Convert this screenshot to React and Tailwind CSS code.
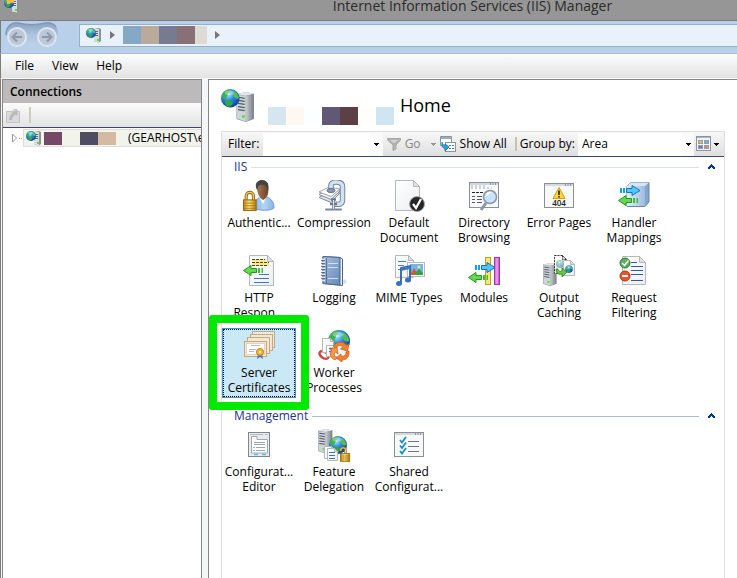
import React from "react";

const Defs = () => (
  <svg width="0" height="0" className="absolute" aria-hidden="true">
    <defs>
      <radialGradient id="sea" cx="40%" cy="30%" r="75%">
        <stop offset="0" stopColor="#a5e8ff" />
        <stop offset="0.4" stopColor="#2b8fe8" />
        <stop offset="1" stopColor="#0b2f9c" />
      </radialGradient>
      <linearGradient id="metal" x1="0" x2="1">
        <stop offset="0" stopColor="#c9ced2" />
        <stop offset="1" stopColor="#7a8187" />
      </linearGradient>
      <linearGradient id="gold" x1="0" x2="1">
        <stop offset="0" stopColor="#c08a1c" />
        <stop offset="0.45" stopColor="#ffe27a" />
        <stop offset="1" stopColor="#b27a10" />
      </linearGradient>
      <linearGradient id="steel" x1="0" x2="1">
        <stop offset="0" stopColor="#c9d8ea" />
        <stop offset="0.5" stopColor="#f2f6fb" />
        <stop offset="1" stopColor="#a9bcd4" />
      </linearGradient>
      <linearGradient id="book" x1="0" x2="1" y1="0" y2="1">
        <stop offset="0" stopColor="#a9c0e2" />
        <stop offset="1" stopColor="#6688b8" />
      </linearGradient>
      <linearGradient id="cube" x1="0" x2="1">
        <stop offset="0" stopColor="#e2eefb" />
        <stop offset="1" stopColor="#9dbbe0" />
      </linearGradient>
      <linearGradient id="pink" x1="0" x2="1">
        <stop offset="0" stopColor="#d455d4" />
        <stop offset="0.5" stopColor="#f0a5ee" />
        <stop offset="1" stopColor="#b63cba" />
      </linearGradient>
      <linearGradient id="shirt" x1="0" x2="1">
        <stop offset="0" stopColor="#7fb4e6" />
        <stop offset="0.5" stopColor="#b5d6f5" />
        <stop offset="1" stopColor="#86b5e4" />
      </linearGradient>
      <linearGradient id="skin" x1="0" x2="1">
        <stop offset="0" stopColor="#a87650" />
        <stop offset="1" stopColor="#6b4228" />
      </linearGradient>
      <linearGradient id="sheet" x1="0" x2="1" y1="0" y2="1">
        <stop offset="0" stopColor="#ffffff" />
        <stop offset="1" stopColor="#eceef0" />
      </linearGradient>
      <linearGradient id="pill" x1="0" x2="0" y1="0" y2="1">
        <stop offset="0" stopColor="#87a3c2" />
        <stop offset="0.5" stopColor="#adc4de" />
        <stop offset="1" stopColor="#bdd2ea" />
      </linearGradient>
    </defs>
  </svg>
);

const Globe = ({ cx, cy, r }) => (
  <g transform={`translate(${cx} ${cy}) scale(${r / 10})`}>
    <circle r="10" fill="url(#sea)" />
    <path d="M-9 -3 C-8 -7 -4 -9.500 -1 -9.500 C1 -8 -1 -6 -3 -5 C-2 -3 -5 -1 -6 1 C-8 0 -9 -1 -9 -3Z" fill="#3fb344" />
    <path d="M-5 2 C-2 1 2 3 3 5 C2 8 -1 9.500 -3 9 C-5 7 -7 5 -5 2Z" fill="#35a83a" />
    <path d="M4 -8 C7 -6 9 -3 9.500 0 C7 1 5 0 4 -2 C2 -3 2 -6 4 -8Z" fill="#55c04c" />
    <ellipse cx="-1" cy="-6" rx="5" ry="2.500" fill="#fff" opacity="0.35" />
  </g>
);

const Tower = ({ x, y, s = 1 }) => (
  <g transform={`translate(${x} ${y}) scale(${s})`}>
    <path d="M0 2 L9 0 L17 1.500 V26 L9 29 L0 26Z" fill="#8b9298" />
    <path d="M0 2 L9 0 L17 1.500 L9 3.500Z" fill="#e3e7ea" />
    <path d="M0.500 2.500 L9 3.800 V28.500 L0.500 25.500Z" fill="#cfd4d9" />
    <path d="M9 3.800 L16.500 2 V25.700 L9 28.500Z" fill="url(#metal)" />
    <path d="M1.500 5 L8 6 M1.500 8 L8 9 M1.500 11 L8 12 M1.500 14 L8 15 M1.500 17 L8 18" stroke="#515a63" strokeWidth="1.200" />
    <rect x="5.500" y="22.500" width="2.500" height="2.500" fill="#4fe32c" />
  </g>
);

const Page = ({ x, y, w, h, fold = 6, dashed }) => (
  <g transform={`translate(${x} ${y})`} stroke={dashed ? "#333" : "#b3b8bd"} strokeDasharray={dashed ? "2 1" : undefined}>
    <path d={`M0 0 H${w - fold} L${w} ${fold} V${h} H0Z`} fill="url(#sheet)" />
    <path d={`M${w - fold} 0 V${fold} H${w}Z`} fill="#dfe3e6" />
  </g>
);

const Win = ({ x, y, w, h }) => (
  <g transform={`translate(${x} ${y})`}>
    <rect x="0.500" y="0.500" width={w - 1} height={h - 1} fill="#f7f8f8" stroke="#8b9097" />
    <rect x="1" y="1" width={w - 2} height="2" fill="#d3d9e1" />
    <path d={`M${w - 9} 2 h1 m1.500 0 h1 m1.500 0 h1`} stroke="#41588a" />
  </g>
);

const ArrowRight = ({ x, y }) => (
  <g transform={`translate(${x} ${y})`}>
    <path d="M0 3 H2 V8 H0Z M3 3 H5 V8 H3Z" fill="#169fe0" />
    <path d="M6.500 3.500 H12 V0.500 L20 5.500 L12 10.500 V7.500 H6.500Z" fill="#54c4fa" stroke="#1277b8" />
  </g>
);

const ArrowLeft = ({ x, y }) => (
  <g transform={`translate(${x} ${y})`}>
    <path d="M20 3 H18.500 V8 H20Z M17 3 H15 V8 H17Z" fill="#3bbf30" />
    <path d="M13.500 3.500 H8 V0.500 L0.500 5.500 L8 10.500 V7.500 H13.500Z" fill="#66d84c" stroke="#27952a" />
  </g>
);

const Lock = ({ x, y, s = 1, open }) => (
  <g transform={`translate(${x} ${y}) scale(${s})`}>
    <path d={open ? "M1 5 V3.500 C1 0 7 0 7 3.500 V9" : "M3 9 V5 C3 0 10 0 10 5 V9"} fill="none" stroke="#8d6410" strokeWidth="3" />
    <path d={open ? "M1 5 V3.500 C1 0 7 0 7 3.500 V9" : "M3 9 V5 C3 0 10 0 10 5 V9"} fill="none" stroke="#f2cf62" strokeWidth="1.300" />
    <rect x="0.500" y="8.500" width="12" height="10" fill="url(#gold)" stroke="#94690f" />
    <path d="M1 11.500 H12 M1 14 H12 M1 16.500 H12" stroke="#a87816" strokeWidth="0.800" />
  </g>
);

const Icon = ({ children, size = 32 }) => (
  <svg width={size} height={size} viewBox="0 0 32 32" aria-hidden="true" className="shrink-0">{children}</svg>
);

const ServerGlobe = ({ size }) => (
  <Icon size={size}>
    <Tower x="15" y="3" />
    <Globe cx="9" cy="9" r="9" />
  </Icon>
);

const SmallServer = ({ badge }) => (
  <svg width="16" height="16" viewBox="0 0 16 16" aria-hidden="true" className="shrink-0">
    <path d="M8 2 L13 1 L15 2 V14 L13 15.500 L8 14.500Z" fill="#8b9299" />
    <path d="M8 2 H13 V15.500 L8 14.500Z" fill="#d7dcde" />
    <path d="M9 4.500 H12 M9 6.500 H12 M9 8.500 H12" stroke="#5f6870" />
    <rect x="11" y="12" width="2" height="2" fill="#55e51e" />
    <Globe cx="5" cy="6" r="5" />
    {badge && <path d="M3 0 H10 V6 H6 V7 H3Z" fill="#f4b93a" />}
  </svg>
);

const icons = {
  auth: (
    <Icon>
      <path d="M11 28 C11 21 14 18 20 16 C27 17 31 21 31 28 C28 31 15 31 11 28Z" fill="url(#shirt)" stroke="#6b9bd0" />
      <path d="M16 17 L20 24 L24 16Z" fill="#f3f8fd" />
      <path d="M14 7 C14 1 24 0 25 6 C26 12 25 18 20 20 C16 18 14 13 14 7Z" fill="url(#skin)" />
      <path d="M13.500 9 C11 2 16 0 19 0 C25 0 26.500 5 25 11 C24 7 22 4 17 5 C15 5 15 8 14.500 10Z" fill="#444445" />
      <Lock x="0" y="11" s={1.05} />
    </Icon>
  ),
  compression: (
    <Icon>
      <path d="M1 17.500 L11 11 L22 13 L13 22.500Z" fill="#dde1e5" stroke="#858d95" />
      <path d="M1 14.500 L11 9 L22 11 L13 19.500Z" fill="#f2f4f6" stroke="#858d95" />
      <path d="M1 12 L11 7 L22 9 L13 16.500Z" fill="#fff" stroke="#9aa1a8" />
      <path d="M13 9 V5 C13 1 24 1 24.500 6 V20 C24.500 24 21 25 17 24" fill="none" stroke="#7487a3" strokeWidth="5.500" />
      <path d="M13 9 V5 C13 1 24 1 24.500 6 V20 C24.500 24 21 25 17 24" fill="none" stroke="#d4e1f0" strokeWidth="3.500" />
      <ellipse cx="13" cy="10.500" rx="4" ry="2" fill="#8b9bb2" stroke="#5f708b" />
      <path d="M13 19.500 H18 M15.500 20 V30 M12 24 H19" stroke="#69788c" strokeWidth="2.500" />
      <path d="M8 29.500 H23" stroke="#7b8797" strokeWidth="2" strokeLinecap="round" />
      <path d="M15.500 20 V29" stroke="#dce3ea" />
    </Icon>
  ),
  document: (
    <Icon>
      <Page x="2.500" y="0.500" w={24} h={30} fold={6} />
      <circle cx="24" cy="24" r="7.500" fill="#262626" stroke="#a6a6a6" />
      <path d="M20 24 L23 28 L28 19" fill="none" stroke="#fff" strokeWidth="2.200" />
    </Icon>
  ),
  browsing: (
    <Icon>
      <Win x={1} y={2} w={30} h={26} />
      <path d="M3 6 H18 M3 8 H24" stroke="#a9aeb4" strokeDasharray="2 2" />
      <path d="M4 12.500 H15" stroke="#222" strokeWidth="1.200" strokeDasharray="3 1" />
      <path d="M4 16.500 H7 M4 19.500 H7 M4 22.500 H7 M9 16.500 H14 M9 19.500 H14 M9 22.500 H14" stroke="#55595f" />
      <path d="M18 23 L13 30" stroke="#8d959e" strokeWidth="3" />
      <circle cx="22" cy="17" r="6.500" fill="#c8e4fa" stroke="#8795a5" strokeWidth="1.500" />
      <path d="M18 16 C18 12 22 11 24 12 C22 13 20 15 18 16Z" fill="#fff" />
    </Icon>
  ),
  error: (
    <Icon>
      <Win x={1} y={3} w={30} h={25} />
      <path d="M16 7.500 L22 18.500 H10Z" fill="#ffd92e" stroke="#d59d10" strokeLinejoin="round" />
      <path d="M16 10.500 V15 M16 16 V17.500" stroke="#222" strokeWidth="1.600" />
      <text x="16" y="26" textAnchor="middle" fontSize="8" fontWeight="600" fontFamily="Open Sans, sans-serif" fill="#222">404</text>
    </Icon>
  ),
  handler: (
    <Icon>
      <path d="M9 6 L13 2.500 H31 V22 L27 26.500 H9Z" fill="#86a5cc" stroke="#6686b0" />
      <path d="M9 6 L13 2.500 H31 L27 6Z" fill="#d7e5f5" />
      <rect x="9" y="6" width="18" height="20" fill="url(#cube)" />
      <ArrowRight x={2} y={5} />
      <ArrowLeft x={0} y={15} />
    </Icon>
  ),
  http: (
    <Icon>
      <Page x="6.500" y="0.500" w={24} h={30} fold={6} />
      <rect x="9" y="4" width="14" height="3" fill="#f8e98b" />
      <rect x="9" y="7" width="17" height="4" fill="#f8e98b" />
      <path d="M9 4.500 H22 M9 7.500 H26 M9 10.500 H25" stroke="#4d4930" strokeDasharray="3 1" />
      <path d="M16 19.500 H26 M11 23.500 H26 M11 27.500 H26" stroke="#4077bd" />
      <ArrowLeft x={0} y={10} />
    </Icon>
  ),
  logging: (
    <Icon>
      <path d="M20 30 L29 28 L27 24Z" fill="#ddd" />
      <path d="M5 1.500 L22 2.500 L24.500 4 V30.500 L5 28.500Z" fill="#e9eff6" stroke="#4a6793" />
      <path d="M5 1.500 L22 2.500 V30 L5 28.500Z" fill="url(#book)" stroke="#4a6793" />
      <path d="M8.500 3 V28" stroke="#56739f" />
      <path d="M10 8.500 H20 M10 12.500 H20 M10 23.500 H20" stroke="#d0dff2" />
      <path d="M3 4.500 H7 M3 7.500 H7 M3 10.500 H7 M3 13.500 H7 M3 16.500 H7 M3 19.500 H7 M3 22.500 H7 M3 25.500 H7" stroke="#e6ebf1" strokeWidth="1.500" />
      <path d="M3 5.500 H7 M3 8.500 H7 M3 11.500 H7 M3 14.500 H7 M3 17.500 H7 M3 20.500 H7 M3 23.500 H7" stroke="#3e506c" strokeWidth="0.700" />
    </Icon>
  ),
  mime: (
    <Icon>
      <Page x="2.500" y="0.500" w={18} h={22} fold={5} />
      <path d="M5 6.500 H13 M5 10.500 H11 M5 14.500 H9" stroke="#4b7ebf" />
      <rect x="14.500" y="7.500" width="17" height="14" fill="#fff" stroke="#b3b8bd" />
      <rect x="17" y="9" width="13" height="11" fill="#6fb6ea" />
      <path d="M17 20 L21 13 L25 20Z" fill="#e5502e" /><path d="M20 20 L26 14 L30 18 V20Z" fill="#3c9c43" />
      <circle cx="26" cy="12" r="1.500" fill="#ffe469" />
      <path d="M8 28 V13 L17 11 V26" fill="none" stroke="#2f5da6" strokeWidth="1.800" />
      <path d="M8 13 L17 11 V14 L8 16Z" fill="#3f78c8" />
      <ellipse cx="6" cy="28.500" rx="3" ry="2.500" fill="#3a70c4" /><ellipse cx="15" cy="25" rx="3" ry="2.500" fill="#3a70c4" />
    </Icon>
  ),
  modules: (
    <Icon>
      <rect x="17.500" y="2.500" width="5" height="27" fill="#f8e776" stroke="#c1a125" />
      <rect x="26.500" y="2.500" width="5" height="27" fill="url(#pink)" stroke="#9a3aa0" />
      <ArrowRight x={7} y={7} />
      <ArrowLeft x={0} y={17} />
    </Icon>
  ),
  caching: (
    <Icon>
      <Tower x="0" y="8" s={0.8} />
      <Page x="11.500" y="0.500" w={12} h={18} fold={4} dashed />
      <g opacity="0.5"><Globe cx={17} cy={9} r={4} /></g>
      <Page x="20.500" y="5.500" w={11} h={15} fold={4} />
      <Globe cx={26} cy={14} r={3.8} />
      <path d="M13 14 C13 19 16 20 19 19 V22 L24 17 L19 13 V16 C17 17 15 16 15 14Z" fill="#63c940" stroke="#287f20" strokeWidth="0.800" />
    </Icon>
  ),
  filtering: (
    <Icon>
      <Page x="4.500" y="1.500" w={23} h={28} fold={6} />
      <path d="M13 7.500 H19 M13 11.500 H25 M13 15.500 H25 M13 19.500 H25 M13 25.500 H25" stroke="#2e59a8" />
      <circle cx="7" cy="8" r="5" fill="#5fae60" stroke="#2e7c35" />
      <path d="M4 8 L6.500 10.500 L10.500 5.500" fill="none" stroke="#fff" strokeWidth="1.500" />
      <circle cx="7" cy="21" r="5" fill="#e8552c" stroke="#b83010" />
      <path d="M4 21 H10" stroke="#fff" strokeWidth="2" />
    </Icon>
  ),
  cert: (
    <Icon>
      <g fill="#f3e7d3" stroke="#c2a987">
        <rect x="9.500" y="1.500" width="22" height="16" /><rect x="7.500" y="4.500" width="22" height="16" /><rect x="4.500" y="7.500" width="22" height="16" />
        <rect x="1.500" y="11.500" width="22" height="15" />
      </g>
      <rect x="3.500" y="13.500" width="18" height="11" fill="#fff" stroke="#e3d3ba" />
      <path d="M8 15.500 H17 M6 19.500 H13 M6 21.500 H11" stroke="#b9b9c2" />
      <path d="M15 24 L14 29 L17 27 L20 29 L19 24Z" fill="#3d7cce" />
      <circle cx="17" cy="22" r="3.500" fill="#f4b62d" stroke="#bf8210" />
      <circle cx="17" cy="22" r="1.200" fill="#fff0a8" />
    </Icon>
  ),
  worker: (
    <Icon>
      <Globe cx={21} cy={11} r={11} />
      <ellipse cx="6" cy="25" rx="5" ry="3" transform="rotate(35 6 25)" fill="#fff" stroke="#d04638" strokeWidth="2.500" />
      <Page x="4.500" y="8.500" w={11} h={14} fold={3} />
      <Page x="8.500" y="15.500" w={11} h={11} fold={3} />
      <path d="M11 18.500 H15 M11 21.500 H14" stroke="#4979bb" strokeWidth="1.500" />
      <circle cx="23" cy="21" r="7" fill="#f0f3fa" />
      <path d="M15 16 C19 11 26 11 28 15 L31 14 L29.500 21 L22.500 19 L25 17 C23 15 20 15 18 18Z" fill="#f3812c" stroke="#c65410" strokeWidth="0.700" />
      <path d="M31 21 C32 27 28 30 24 30 L24 32 L18 28 L23 24 V26 C27 27 28 24 28 22Z" fill="#f3812c" stroke="#c65410" strokeWidth="0.700" />
      <path d="M17 30 C12 28 11 23 14 20 L12 19 L19 17 L20 24 L17.500 22 C15.500 24 16 27 19 28Z" fill="#f59a42" stroke="#c65410" strokeWidth="0.700" />
    </Icon>
  ),
  editor: (
    <Icon>
      <rect x="5.500" y="3.500" width="21" height="24" fill="#e8ebee" stroke="#80868c" />
      <path d="M7 5.500 H20 M22 5.500 H25" stroke="#b4bbc3" />
      <path d="M8.500 24 V7.500 H14 V10.500 H24.500 V24Z" fill="#fff" stroke="#a2a8af" />
      <path d="M11 13.500 H22 M11 15.500 H22 M13 18.500 H22 M13 21.500 H22" stroke="#9ba3ab" />
      <path d="M10 18.500 H12 M10 21.500 H12" stroke="#62c4ef" strokeWidth="1.200" />
      <path d="M11 25.500 H15 M19 25.500 H23" stroke="#47c2ee" strokeWidth="1.500" />
    </Icon>
  ),
  delegation: (
    <svg width="34" height="34" viewBox="0 0 34 34" className="shrink-0" aria-hidden="true">
      <Tower x="1" y="1" s={0.85} />
      <Globe cx={21} cy={17} r={9} />
      <Page x="7.500" y="18.500" w={10} h={12} fold={3} />
      <Page x="10.500" y="20.500" w={10} h={12} fold={3} />
      <path d="M12 24.500 H18 M12 27.500 H18 M12 30.500 H18" stroke="#3e6fb5" />
      <Lock x="23" y="19" s={0.78} open />
    </svg>
  ),
  shared: (
    <Icon>
      <Win x={1} y={3} w={30} h={25} />
      <path d="M15 12.500 H26 M15 17.500 H26 M15 22.500 H26" stroke="#6b7396" />
      <path d="M7 11 L9 13.500 L13 8 M7 16.500 L9 19 L13 13.500 M7 22 L9 24.500 L13 19" fill="none" stroke="#1a8ad0" strokeWidth="1.800" />
    </Icon>
  ),
};

const iis = [
  ["auth", ["Authentic..."]],
  ["compression", ["Compression"]],
  ["document", ["Default", "Document"]],
  ["browsing", ["Directory", "Browsing"]],
  ["error", ["Error Pages"]],
  ["handler", ["Handler", "Mappings"]],
  ["http", ["HTTP", "Respon..."]],
  ["logging", ["Logging"]],
  ["mime", ["MIME Types"]],
  ["modules", ["Modules"]],
  ["caching", ["Output", "Caching"]],
  ["filtering", ["Request", "Filtering"]],
  ["cert", ["Server", "Certificates"]],
  ["worker", ["Worker", "Processes"]],
];

const management = [
  ["editor", ["Configurat...", "Editor"]],
  ["delegation", ["Feature", "Delegation"]],
  ["shared", ["Shared", "Configurat..."]],
];

const Tile = ({ icon, lines }) => {
  const selected = icon === "cert";
  return (
    <button className={`relative flex h-[70px] flex-col items-center gap-1 border ${selected ? "border-[#26a0da] bg-[#cbe8f6] outline-1 -outline-offset-2 outline-dotted outline-black" : "border-transparent"}`}>
      <span className="flex h-8 items-center pt-0.5">{icons[icon]}</span>
      <span className="leading-[15px]">
        {lines.map((line) => <span key={line} className="block whitespace-nowrap">{line}</span>)}
      </span>
      {selected && <span className="pointer-events-none absolute -inset-x-3.5 -top-3.5 -bottom-[13px] z-10 rounded-[3px] border-8 border-[#00ea00]" />}
    </button>
  );
};

const Group = ({ title, items, line }) => (
  <section className="pb-2">
    <h2 className="flex h-5 items-center gap-1 pl-3 pr-2 text-[#1e3287]">
      {title}
      <span className={`h-px flex-1 ${line}`} />
      <button aria-label={`Collapse ${title}`} className="pl-1">
        <svg width="9" height="6" viewBox="0 0 9 6" shapeRendering="crispEdges"><path d="M1 5 L4.500 1.500 L8 5" fill="none" stroke="#003399" strokeWidth="2" /></svg>
      </button>
    </h2>
    <div className="mt-px grid grid-cols-[repeat(auto-fill,74px)] gap-x-px gap-y-[5px]">
      {items.map(([icon, lines]) => <Tile key={icon} icon={icon} lines={lines} />)}
    </div>
  </section>
);

const Down = ({ color = "#000" }) => (
  <svg width="5" height="3" viewBox="0 0 5 3" className="shrink-0" shapeRendering="crispEdges" aria-hidden="true"><path d="M0 0 H5 L2.500 3Z" fill={color} /></svg>
);

const Crumb = () => (
  <svg width="5" height="8" viewBox="0 0 5 8" className="shrink-0" aria-hidden="true"><path d="M0 0 L5 4 L0 8Z" fill="#777" /></svg>
);

const Block = ({ className }) => <span className={`h-[18px] w-[18px] shrink-0 ${className}`} />;

const NavArrow = ({ label, flip }) => (
  <button aria-label={label} className="flex size-5 items-center justify-center rounded-full border-2 border-[#dfe5ec] bg-[#b9c8da]">
    <svg width="12" height="12" viewBox="0 0 12 12" className={flip ? "rotate-180" : ""}><path d="M11 6 H2 M6 1.500 L1.500 6 L6 10.500" fill="none" stroke="#8f98a5" strokeWidth="2" /></svg>
  </button>
);

export default function App() {
  return (
    <div className="flex h-screen min-h-[500px] flex-col overflow-hidden bg-[#f0f0f0] font-['Segoe_UI','Open_Sans',sans-serif] text-[12px] leading-4 text-black">
      <Defs />
      <header className="flex h-[21px] shrink-0 items-start border-b border-[#7c7c7c] bg-[#969696] pl-1">
        <span className="-mt-[3px]"><SmallServer badge /></span>
        <h1 className="-mt-1 flex-1 pl-47 text-center text-[14px] leading-5 text-[#2b2b2b]">Internet Information Services (IIS) Manager</h1>
      </header>

      <nav aria-label="Address" className="flex h-[33px] shrink-0 items-center gap-5 border-b border-l border-b-[#a8bdd8] border-l-[#7c7c7c] bg-[#b9d0ea] pb-1 pl-1">
        <div className="grid w-[54px] shrink-0">
          <svg width="54" height="28" viewBox="0 0 54 28" className="col-start-1 row-start-1" aria-hidden="true">
            <path d="M1 15 C0 5 7 1 13 2 C21 4 32 4 40 2 C49 1 54 6 53 15 C53 22 49 26 42 26 C34 23 21 23 13 26 C5 26 1 22 1 15Z" fill="url(#pill)" />
            <path d="M1 14 C1 5 7 1 13 2 C21 4 32 4 40 2 C45 1 49 3 51 6" fill="none" stroke="#7f99b7" strokeWidth="1.500" />
          </svg>
          <div className="col-start-1 row-start-1 flex items-center justify-between px-0.5 pt-1">
            <NavArrow label="Back" />
            <NavArrow label="Forward" flip />
          </div>
        </div>
        <div className="flex h-[23px] flex-1 items-center border-y border-l border-[#98afc8] bg-[#e9f2fa] pl-1.5">
          <SmallServer />
          <span className="px-2"><Crumb /></span>
          <Block className="bg-[#84a8c6]" />
          <Block className="bg-[#b9aa9b]" />
          <Block className="bg-[#767b91]" />
          <Block className="bg-[#887175]" />
          <span className="mr-2 h-[18px] w-3 bg-[#dedad4]" />
          <Crumb />
        </div>
      </nav>

      <nav aria-label="Menu" className="flex h-[25px] shrink-0 items-center gap-[18px] border-b border-l border-b-[#f8f8f8] border-l-[#7c7c7c] bg-linear-to-b from-[#fdfdfd] to-[#e2e2e2] pl-3.5">
        <button>File</button>
        <button>View</button>
        <button>Help</button>
      </nav>

      <main className="flex min-h-0 flex-1 gap-1.5 border-l border-[#7c7c7c] bg-[#f5f6f7] pl-px">
        <aside className="flex w-[200px] shrink-0 flex-col border border-b-0 border-[#868686] bg-white">
          <h2 className="h-[23px] shrink-0 bg-[#bcbabb] px-[7px] pt-1 font-semibold">Connections</h2>
          <div className="flex h-[25px] shrink-0 items-center gap-2 border-b border-[#45456b] bg-linear-to-b from-[#fbfbfb] to-[#e3e3e3] pl-[3px]">
            <button aria-label="Connect">
              <svg width="15" height="15" viewBox="0 0 15 15"><path d="M0.500 3.500 H6 L8 1.500 H11 V3.500 H13.500 V14.500 H0.500Z" fill="#dadada" stroke="#c4c4c4" /><path d="M3 12 C3 8 5 6 7 5 L5 4 L11 2.500 L12 8 L10 6.500 C8 7 6 9 6 12Z" fill="#b9b9b9" /></svg>
            </button>
            <span className="h-4 w-0.5 bg-[#cdcdbc]" />
          </div>
          <div className="flex items-center overflow-hidden pl-[9px] pt-px">
            <svg width="11" height="10" viewBox="0 0 11 10" className="shrink-0"><path d="M0.500 1 L4.500 5 L0.500 9Z" fill="#fff" stroke="#999" /><path d="M7 5.500 h1 m1 0 h1" stroke="#999" /></svg>
            <div className="flex h-[18px] flex-1 items-center border border-r-0 border-[#dedede] bg-[#f2f3eb] pl-0.5">
              <SmallServer />
              <span className="ml-0.5 h-[13px] w-[18px] shrink-0 bg-[#754865]" />
              <span className="ml-[18px] h-[13px] w-[18px] shrink-0 bg-[#4c4c62]" />
              <span className="mr-3 h-[13px] w-[18px] shrink-0 bg-[#d4b9a3]" />
              <span className="whitespace-nowrap">(GEARHOST\e</span>
            </div>
          </div>
        </aside>

        <section className="flex min-w-0 flex-1 flex-col border-l border-t border-[#868686] bg-white pl-3 pr-3">
          <div className="flex h-[51px] shrink-0 items-center">
            <ServerGlobe size={33} />
            <div className="ml-3.5 mt-5 flex">
              <Block className="bg-[#d6e6f1]" />
              <Block className="bg-[#fef8f2]" />
              <Block className="bg-[#fcffff]" />
              <Block className="bg-[#615873]" />
              <Block className="bg-[#5d4045]" />
              <Block className="bg-[#fffefa]" />
              <Block className="bg-[#cfe6f2]" />
            </div>
            <h1 className="ml-1.5 pb-0.5 text-[18px] leading-6">Home</h1>
          </div>

          <div className="flex min-h-0 flex-1 flex-col border-x border-t border-[#dedede]">
            <div className="flex h-[25px] shrink-0 items-center border-b border-[#45456b] bg-linear-to-b from-[#f8f8f8] to-[#e0dfe0]">
              <label htmlFor="filter" className="w-[41px] pl-1.5">Filter:</label>
              <input id="filter" type="text" className="h-[23px] min-w-0 flex-1 bg-white px-1 outline-none" />
              <button aria-label="Filter history" className="flex h-[23px] w-[13px] items-center justify-center bg-[#fbfbfb]"><Down /></button>
              <button className="ml-1 flex items-center gap-1 text-[#868686]">
                <svg width="14" height="14" viewBox="0 0 14 14" aria-hidden="true"><path d="M0.500 1.500 H13.500 V3 L9 8 V12 L6 13.500 V8 L0.500 3Z" fill="#b3b3b3" stroke="#a8a8a8" /><path d="M3 3 H11 L7 6Z" fill="#d5d5d5" /></svg>
                Go
              </button>
              <button aria-label="Go options" className="ml-2.5"><Down color="#969696" /></button>
              <button className="ml-1 flex items-center gap-1 whitespace-nowrap">
                <svg width="16" height="16" viewBox="0 0 16 16" aria-hidden="true">
                  <path d="M0.500 0.500 H11.500 V9.500 H0.500Z" fill="#fff" stroke="#8795a5" /><path d="M1 2 H11" stroke="#9caabd" strokeWidth="2" />
                  <rect x="5.500" y="6.500" width="10" height="9" fill="#fff" stroke="#8795a5" /><path d="M9 9.500 H14 M9 12.500 H14" stroke="#5c67aa" strokeDasharray="2 1" />
                  <path d="M2 6 V9 C2 11 3 12 5 12 V15 L9 11 L5 8 V10" fill="#2da0df" stroke="#1679b8" />
                </svg>
                Show All
              </button>
              <span className="ml-2 h-3.5 w-0.5 bg-[#c4c4ad]" />
              <label htmlFor="group" className="mx-[3px] whitespace-nowrap">Group by:</label>
              <div className="relative h-[23px] w-[116px] shrink-0">
                <select id="group" className="h-full w-full appearance-none bg-white pl-1 outline-none"><option>Area</option></select>
                <span className="pointer-events-none absolute inset-y-0 right-0 flex w-3 items-center justify-center bg-[#fbfbfb]"><Down /></span>
              </div>
              <button aria-label="View" className="ml-0.5 mr-[5px] flex items-center gap-0.5">
                <svg width="16" height="16" viewBox="0 0 16 16">
                  <rect x="0.500" y="0.500" width="14" height="14" fill="#f1f3f5" stroke="#8d95a0" /><path d="M1 1.500 H14" stroke="#a9b5c6" />
                  <g stroke="#959da7"><rect x="2.500" y="4.500" width="4" height="3" fill="#d5c54d" /><rect x="8.500" y="4.500" width="4" height="3" fill="#65b2df" /><rect x="2.500" y="9.500" width="4" height="3" fill="#7c6fce" /><rect x="8.500" y="9.500" width="4" height="3" fill="#e18666" /></g>
                </svg>
                <Down />
              </button>
            </div>
            <Group title="IIS" items={iis} line="bg-[#d8dff0]" />
            <Group title="Management" items={management} line="bg-[#adbbdb]" />
          </div>
        </section>
      </main>
    </div>
  );
}
